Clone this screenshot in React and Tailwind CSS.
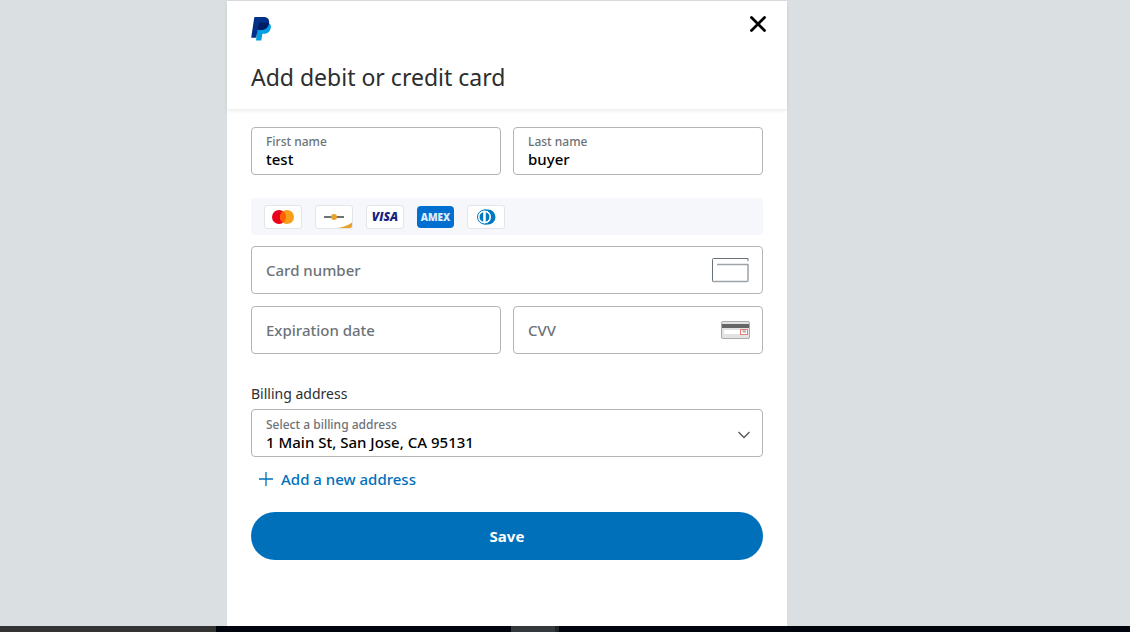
import React from "react";

const fieldBox =
  "flex h-12 items-center rounded border border-[#b0b5b7] bg-white pr-3 pl-[14px]";
const labelText = "text-xs leading-4 font-medium text-[#6c7378]";
const valueText = "h-[18px] w-full bg-transparent text-[15px] leading-[18px] font-medium text-black outline-none";
const emptyLabel = "shrink-0 text-[15px] leading-5 font-medium text-[#6c7378]";
const cardFrame =
  "flex h-6 w-[38px] items-center justify-center overflow-hidden rounded-[3px] border border-[#e4e5e9] bg-white";

function PayPalLogo() {
  return (
    <svg viewBox="0 0 20 24" className="h-6 w-5" role="img" aria-label="PayPal">
      <path d="M7 6H17.8C19.7 7.2 20.2 9 19.7 11.2C18.9 15 16.2 16.7 12.7 16.7H11.4L10.3 23.6H5Z" fill="#009fe3" />
      <path d="M4 0H12.4C16.6 0 18.8 2.3 18 6.3C17.2 10.8 14.2 13 9.7 13H6.6L5.2 20.8H0.2L3.2 0.8C3.3.3 3.6 0 4 0Z" fill="#003087" />
      <path d="M8.5 5.7H18C17.3 10.7 14.2 13 9.7 13H6.6L7.6 6.5C7.7 6 8 5.7 8.5 5.7Z" fill="#001c64" />
    </svg>
  );
}

function TextField({ id, label, value }) {
  return (
    <div className={fieldBox}>
      <div className="flex w-full flex-col">
        <label htmlFor={id} className={labelText}>{label}</label>
        <input id={id} type="text" defaultValue={value} className={valueText} />
      </div>
    </div>
  );
}

function EmptyField({ id, label, children }) {
  return (
    <div className={fieldBox}>
      <label htmlFor={id} className={emptyLabel}>{label}</label>
      <input id={id} type="text" inputMode="numeric" className="min-w-0 flex-1 bg-transparent outline-none" />
      {children}
    </div>
  );
}

function CardBrands() {
  return (
    <div className="mt-[23px] flex h-[37px] items-center gap-[13px] rounded bg-[#f5f7fb] px-[13px]">
      <span className={cardFrame}>
        <svg viewBox="0 0 36 22" className="h-[22px] w-9" role="img" aria-label="Mastercard">
          <circle cx="14" cy="11" r="7" fill="#eb001b" />
          <circle cx="22" cy="11" r="7" fill="#f79e1b" />
          <path d="M18 5.3A7 7 0 0 1 18 16.7A7 7 0 0 1 18 5.3Z" fill="#ff5f00" />
        </svg>
      </span>
      <span className={cardFrame}>
        <svg viewBox="0 0 36 22" className="h-[22px] w-9" role="img" aria-label="Discover">
          <path d="M8 11H28" stroke="#3f4448" strokeWidth="1.7" />
          <circle cx="18" cy="11" r="3" fill="#e9a12b" />
          <path d="M22 22C28 21 33 19 36 16.5V22Z" fill="#e9a12b" />
        </svg>
      </span>
      <span className={cardFrame}>
        <span className="font-['Open_Sans',sans-serif] text-xs leading-4 font-extrabold text-[#1a1f80] italic">VISA</span>
      </span>
      <span className="flex h-[22px] w-[37px] items-center justify-center rounded-sm bg-[#006fcf] font-['Open_Sans',sans-serif] text-[10px] leading-4 font-extrabold text-[#dcecfa]">
        AMEX
      </span>
      <span className={cardFrame}>
        <svg viewBox="0 0 36 22" className="h-[22px] w-9" role="img" aria-label="Diners Club">
          <path d="M16 3.5H20A7.5 7.5 0 0 1 20 18.5H16Z" fill="#0079be" />
          <circle cx="16.5" cy="11" r="7" fill="#fff" stroke="#0079be" strokeWidth="1" />
          <path d="M15.2 6.2A5 5 0 0 0 15.2 15.8ZM17.8 6.2A5 5 0 0 1 17.8 15.8Z" fill="#0079be" />
        </svg>
      </span>
    </div>
  );
}

export default function App() {
  return (
    <div className="flex min-h-screen flex-col bg-[#dadfe1] font-['Noto_Sans','Open_Sans',sans-serif]">
      <div className="grid flex-1 grid-cols-[227fr_minmax(0,560px)_343fr]">
        <main className="col-start-2 border-t border-[#d9dbe1] bg-white">
          <header className="h-[108px] px-6 shadow-[0_2px_4px_rgba(0,0,0,0.08)]">
            <div className="-mr-1 flex items-start justify-between pt-[14px]">
              <div className="pt-[2px]"><PayPalLogo /></div>
              <button type="button" aria-label="Close" className="flex size-[18px] items-center justify-center">
                <svg viewBox="0 0 18 18" className="size-[18px]" fill="none" stroke="#000" strokeWidth="2.8" strokeLinecap="round">
                  <path d="M2.5 2.5L15.5 15.5M15.5 2.5L2.5 15.5" />
                </svg>
              </button>
            </div>
            <h1 className="mt-5 text-[23px] leading-8 text-[#2c2e2f]">Add debit or credit card</h1>
          </header>

          <form className="px-6 pt-[18px]" onSubmit={(e) => e.preventDefault()}>
            <div className="grid grid-cols-2 gap-3">
              <TextField id="first-name" label="First name" value="test" />
              <TextField id="last-name" label="Last name" value="buyer" />
            </div>
            <CardBrands />
            <div className="mt-[11px] grid grid-cols-2 gap-3">
              <div className="col-span-2">
                <EmptyField id="card-number" label="Card number">
                  <svg viewBox="0 0 38 26" className="h-[26px] w-[38px] shrink-0" fill="none" aria-hidden="true">
                    <path d="M36 4V1.5H1.5Q.5 1.5 .5 2.5V24" stroke="#687078" />
                    <path d="M.5 23.5Q.5 24.5 1.5 24.5H35Q36 24.500 36 23.5V7.5" stroke="#9da3a6" strokeWidth="1.5" />
                    <path d="M5 7.5H36.5" stroke="#9da3a6" strokeWidth="1.5" />
                  </svg>
                </EmptyField>
              </div>
              <EmptyField id="expiration" label="Expiration date" />
              <EmptyField id="cvv" label="CVV">
                <svg viewBox="0 0 29 18" className="h-[18px] w-[29px] shrink-0" aria-hidden="true">
                  <rect x=".5" y=".5" width="28" height="17" rx="1.5" fill="#e3e3e3" stroke="#aaa" />
                  <rect x="1" y="3" width="27" height="4" fill="#666" />
                  <rect x="3" y="9" width="17" height="4" fill="#fff" />
                  <rect x="19.5" y="8.5" width="7" height="5" fill="#fff" stroke="#e58078" />
                  <path d="M21 10H25M22 11H25" stroke="#999" />
                </svg>
              </EmptyField>
            </div>

            <h2 className="mt-[30px] text-sm leading-5 text-[#2c2e2f]">Billing address</h2>
            <div className={"mt-[5px] " + fieldBox}>
              <div className="flex flex-1 flex-col pt-[2px]">
                <label htmlFor="billing" className={labelText}>Select a billing address</label>
                <select id="billing" className={valueText + " appearance-none"}>
                  <option>1 Main St, San Jose, CA 95131</option>
                </select>
              </div>
              <svg viewBox="0 0 12 8" className="mt-1 h-2 w-3 shrink-0" fill="none" stroke="#555" strokeWidth="1.3" aria-hidden="true">
                <path d="M.5 1L6 6.5L11.5 1" />
              </svg>
            </div>
            <button type="button" className="mt-3 ml-2 flex items-center gap-2 text-[15px] leading-5 font-medium text-[#0070ba]">
              <svg viewBox="0 0 14 14" className="size-[14px]" stroke="currentColor" strokeWidth="1.3" aria-hidden="true">
                <path d="M7 0V14M0 7H14" />
              </svg>
              Add a new address
            </button>
            <button type="submit" className="mt-[23px] h-12 w-full rounded-full bg-[#0070ba] text-[15px] leading-5 font-bold text-white">
              Save
            </button>
          </form>
        </main>
      </div>
      <footer className="grid h-[6px] grid-cols-[216fr_295fr_48fr_571fr] bg-[#00040c]">
        <div className="bg-[#333333]" />
        <div className="col-start-3 border-r-4 border-[#202428] bg-[#33383d]" />
      </footer>
    </div>
  );
}
